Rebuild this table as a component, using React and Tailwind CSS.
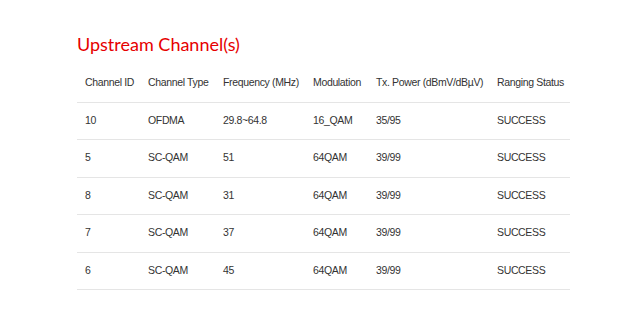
const rows = [
  ["10", "OFDMA", "29.8~64.8", "16_QAM", "35/95", "SUCCESS"],
  ["5", "SC-QAM", "51", "64QAM", "39/99", "SUCCESS"],
  ["8", "SC-QAM", "31", "64QAM", "39/99", "SUCCESS"],
  ["7", "SC-QAM", "37", "64QAM", "39/99", "SUCCESS"],
  ["6", "SC-QAM", "45", "64QAM", "39/99", "SUCCESS"],
];

const headers = [
  "Channel ID",
  "Channel Type",
  "Frequency (MHz)",
  "Modulation",
  "Tx. Power (dBmV/dBµV)",
  "Ranging Status",
];

export default function App() {
  return (
    <div className="w-[624px] h-[328px] bg-white pl-[77px] pt-[31px]">
      <h2 className="text-[18px] leading-[26px] text-[#e60000] font-['Lato',sans-serif]">
        Upstream Channel(s)
      </h2>
      <table className="mt-[8px] w-[493px] table-fixed border-collapse font-['Liberation_Sans',Arial,sans-serif] text-[10.5px] tracking-[-0.35px] text-[#333]">
        <colgroup>
          <col className="w-[63px]" />
          <col className="w-[75px]" />
          <col className="w-[90px]" />
          <col className="w-[63px]" />
          <col className="w-[121px]" />
          <col className="w-[81px]" />
        </colgroup>
        <thead>
          <tr className="h-[37px] border-b border-[#e5e5e5]">
            {headers.map((h) => (
              <th key={h} className="pl-2 text-left font-normal whitespace-nowrap">
                {h}
              </th>
            ))}
          </tr>
        </thead>
        <tbody>
          {rows.map((r, i) => (
            <tr key={i} className="h-[37.5px] border-b border-[#e5e5e5]">
              {r.map((c, j) => (
                <td key={j} className="pl-2 whitespace-nowrap">
                  {c}
                </td>
              ))}
            </tr>
          ))}
        </tbody>
      </table>
    </div>
  );
}
